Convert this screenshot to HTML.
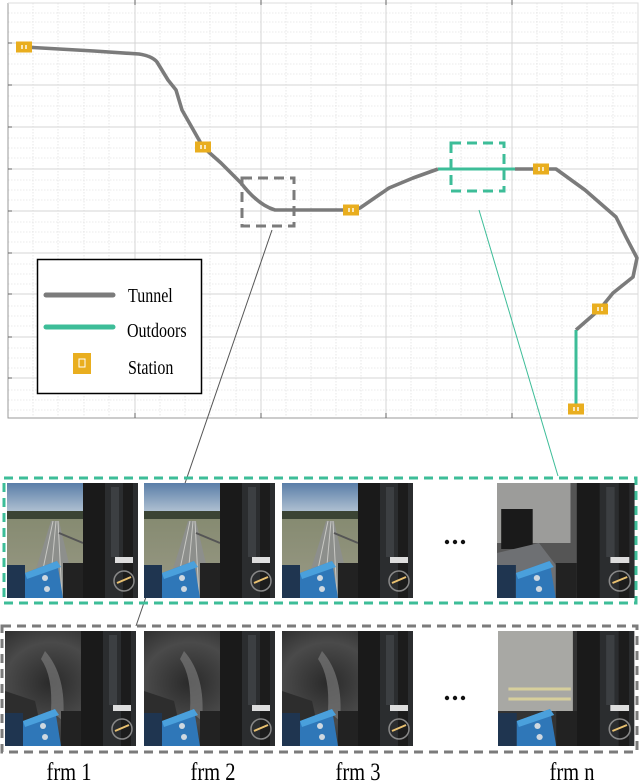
<!DOCTYPE html>
<html><head><meta charset="utf-8"><style>
html,body{margin:0;padding:0;background:#fff;width:640px;height:782px;overflow:hidden}
svg{display:block}
text{font-family:"Liberation Serif",serif}
</style></head><body>
<svg width="640" height="782" viewBox="0 0 640 782" xmlns="http://www.w3.org/2000/svg">
<defs>
<linearGradient id="sky" x1="0" y1="0" x2="0" y2="1"><stop offset="0" stop-color="#5a7ea8"/><stop offset="1" stop-color="#b9c8d6"/></linearGradient>
<linearGradient id="gnd" x1="0" y1="0" x2="0" y2="1"><stop offset="0" stop-color="#7d8468"/><stop offset="1" stop-color="#9a9a86"/></linearGradient>
<radialGradient id="tun" cx="0.35" cy="0.45" r="0.7"><stop offset="0" stop-color="#2a2a2a"/><stop offset="0.5" stop-color="#4a4a4a"/><stop offset="1" stop-color="#1e1e1e"/></radialGradient>
<g id="cab">
 <rect x="76" y="0" width="22" height="115" fill="#1a1a1a"/>
 <rect x="98" y="0" width="33" height="115" fill="#2b2d2f"/>
 <rect x="104" y="4" width="8" height="70" fill="#3c3f42"/>
 <rect x="116" y="0" width="10" height="115" fill="#1c1c1c"/>
 <rect x="108" y="74" width="18" height="6" fill="#ddd"/>
 <circle cx="117" cy="98" r="10" fill="none" stroke="#888" stroke-width="1.5"/>
 <path d="M110 100 l14 -6" stroke="#e8c070" stroke-width="2"/>
 <rect x="0" y="82" width="18" height="33" fill="#1f3550"/>
 <path d="M18 90 L50 78 L56 115 L18 115Z" fill="#2f77b8"/>
 <path d="M18 90 L50 78 L54 84 L20 96Z" fill="#4aa0dc"/>
 <circle cx="38" cy="95" r="3" fill="#cfd8e0"/><circle cx="40" cy="106" r="3" fill="#cfd8e0"/>
 <rect x="56" y="80" width="20" height="35" fill="#222"/>
</g>
<g id="out">
 <rect width="131" height="115" fill="url(#gnd)"/>
 <rect width="131" height="32" fill="url(#sky)"/>
 <rect x="0" y="28" width="131" height="8" fill="#3b4434"/>
 <path d="M20 115 L44 38 L52 38 L70 115Z" fill="#8d8f8c"/>
 <path d="M30 115 L46 38 M42 115 L49 38 M55 115 L51 38" stroke="#c8c8c4" stroke-width="1"/>
 <path d="M52 50 L76 60" stroke="#555" stroke-width="2"/>
 <use href="#cab"/>
</g>
<g id="tn">
 <rect width="131" height="115" fill="url(#tun)"/>
 <path d="M40 20 Q62 45 58 90 L46 80 Q48 45 36 28Z" fill="#777" opacity="0.7"/>
 <path d="M0 60 L30 70 L40 115 L0 115Z" fill="#2d2d2d"/>
 <use href="#cab"/>
</g>
<g id="st"><rect x="-8" y="-5.5" width="16" height="11" fill="#e9ae1f"/><rect x="-3" y="-2" width="2" height="4" fill="#fff" opacity=".7"/><rect x="1" y="-2" width="2" height="4" fill="#fff" opacity=".7"/></g>
</defs>

<g stroke="#d8d8d8" stroke-width="0.6" stroke-dasharray="1.5 1.5">
 <path d="M33 3V417M58 3V417M84 3V417M109 3V417M160 3V417M185 3V417M210 3V417M236 3V417M286 3V417M311 3V417M336 3V417M361 3V417M411 3V417M436 3V417M461 3V417M487 3V417M537 3V417M562 3V417M587 3V417M613 3V417"/>
 <path d="M8 22H638M8 64H638M8 106H638M8 148H638M8 190H638M8 232H638M8 274H638M8 316H638M8 358H638M8 400H638"/>
 <path d="M8 13H638M8 32H638M8 54H638M8 74H638M8 96H638M8 116H638M8 138H638M8 158H638M8 180H638M8 200H638M8 222H638M8 242H638M8 264H638M8 284H638M8 306H638M8 326H638M8 348H638M8 368H638M8 390H638M8 410H638"/>
</g>
<g stroke="#d4d4d4" stroke-width="1">
 <path d="M135 3V417M261 3V417M386 3V417M512 3V417"/>
 <path d="M8 43H638M8 85H638M8 127H638M8 169H638M8 211H638M8 253H638M8 294H638M8 337H638M8 378H638"/>
</g>
<path d="M8 3V418H638" fill="none" stroke="#999" stroke-width="1"/>
<path d="M8 3H638V418" fill="none" stroke="#ddd" stroke-width="1"/>
<path d="M135 0v5M261 0v5M386 0v5M512 0v5M135 418v-5M261 418v-5M386 418v-5M512 418v-5M8 43h4M8 85h4M8 127h4M8 169h4M8 211h4M8 253h4M8 294h4M8 337h4M8 378h4" stroke="#666" stroke-width="1"/>

<path d="M24 47 L94 51 L139 54 Q152 56 157 62 L168 80 L176 90 L182 110 L203 147 L221 163 L241 183 Q258 205 275 210 L351 210 L360 208 L389 188 L413 178 L438 169" fill="none" stroke="#7b7b7b" stroke-width="3.6" stroke-linejoin="round"/>
<path d="M438 169 H515" stroke="#3dbd98" stroke-width="3"/>
<path d="M515 169 H556 L585 190 L616 217 L626 237 L637 258 L633 277 L613 293 L600 309 L576 330" fill="none" stroke="#7b7b7b" stroke-width="3.6" stroke-linejoin="round"/>
<path d="M576 330 V409" stroke="#3dbd98" stroke-width="3"/>
<use href="#st" x="24" y="47"/><use href="#st" x="203" y="147"/><use href="#st" x="351" y="210"/><use href="#st" x="541" y="169"/><use href="#st" x="600" y="309"/><use href="#st" x="576" y="409"/>

<rect x="242" y="178" width="52" height="48" fill="none" stroke="#7b7b7b" stroke-width="3" stroke-dasharray="10 6"/>
<rect x="451" y="143" width="53" height="48" fill="none" stroke="#3dbd98" stroke-width="3" stroke-dasharray="10 6"/>
<path d="M272 230 L136 626" stroke="#555" stroke-width="1"/>
<path d="M479 210 L558 476" stroke="#3dbd98" stroke-width="1"/>

<rect x="37.5" y="259.5" width="164" height="134" fill="#fff" stroke="#000" stroke-width="1.5"/>
<path d="M46 295 H113" stroke="#7b7b7b" stroke-width="5" stroke-linecap="round"/>
<path d="M46 327 H113" stroke="#3dbd98" stroke-width="5" stroke-linecap="round"/>
<rect x="73" y="353" width="18" height="21" fill="#e9ae1f"/><rect x="79" y="359" width="6" height="8" fill="none" stroke="#fff" stroke-width="1"/>
<text font-size="20" transform="translate(128,302) scale(0.8,1)">Tunnel</text>
<text font-size="20" transform="translate(127,337) scale(0.8,1)">Outdoors</text>
<text font-size="20" transform="translate(128,374) scale(0.8,1)">Station</text>

<use href="#out" transform="translate(7,483)"/>
<use href="#out" transform="translate(144,483)"/>
<use href="#out" transform="translate(282,483)"/>
<g transform="translate(497,483) scale(1.05,1)">
 <rect width="131" height="115" fill="#555"/>
 <rect x="0" y="0" width="70" height="60" fill="#9c9c9a"/>
 <rect x="4" y="26" width="30" height="40" fill="#1a1a1a"/>
 <path d="M0 70 L40 60 L80 115 L0 115Z" fill="#6e7073"/>
 <use href="#cab"/>
</g>
<rect x="4" y="478" width="632" height="125" fill="none" stroke="#3dbd98" stroke-width="3" stroke-dasharray="9 6"/>
<g fill="#111"><circle cx="447" cy="542" r="2.2"/><circle cx="455" cy="542" r="2.2"/><circle cx="463" cy="542" r="2.2"/></g>

<use href="#tn" transform="translate(5,631)"/>
<use href="#tn" transform="translate(144,631)"/>
<use href="#tn" transform="translate(282,631)"/>
<g transform="translate(498,631) scale(1.04,1)">
 <rect width="131" height="115" fill="#333"/>
 <rect x="0" y="0" width="72" height="80" fill="#a8a8a4"/>
 <path d="M10 58 H70 M10 68 H70" stroke="#d7cf9c" stroke-width="3"/>
 <use href="#cab"/>
</g>
<rect x="2" y="626" width="635" height="126" fill="none" stroke="#7b7b7b" stroke-width="3" stroke-dasharray="9 6"/>
<g fill="#111"><circle cx="447" cy="698" r="2.2"/><circle cx="455" cy="698" r="2.2"/><circle cx="463" cy="698" r="2.2"/></g>

<text font-size="25" text-anchor="middle" transform="translate(69,780) scale(0.82,1)">frm 1</text>
<text font-size="25" text-anchor="middle" transform="translate(213,780) scale(0.82,1)">frm 2</text>
<text font-size="25" text-anchor="middle" transform="translate(358,780) scale(0.82,1)">frm 3</text>
<text font-size="25" text-anchor="middle" transform="translate(572,780) scale(0.82,1)">frm n</text>
</svg>
</body></html>
